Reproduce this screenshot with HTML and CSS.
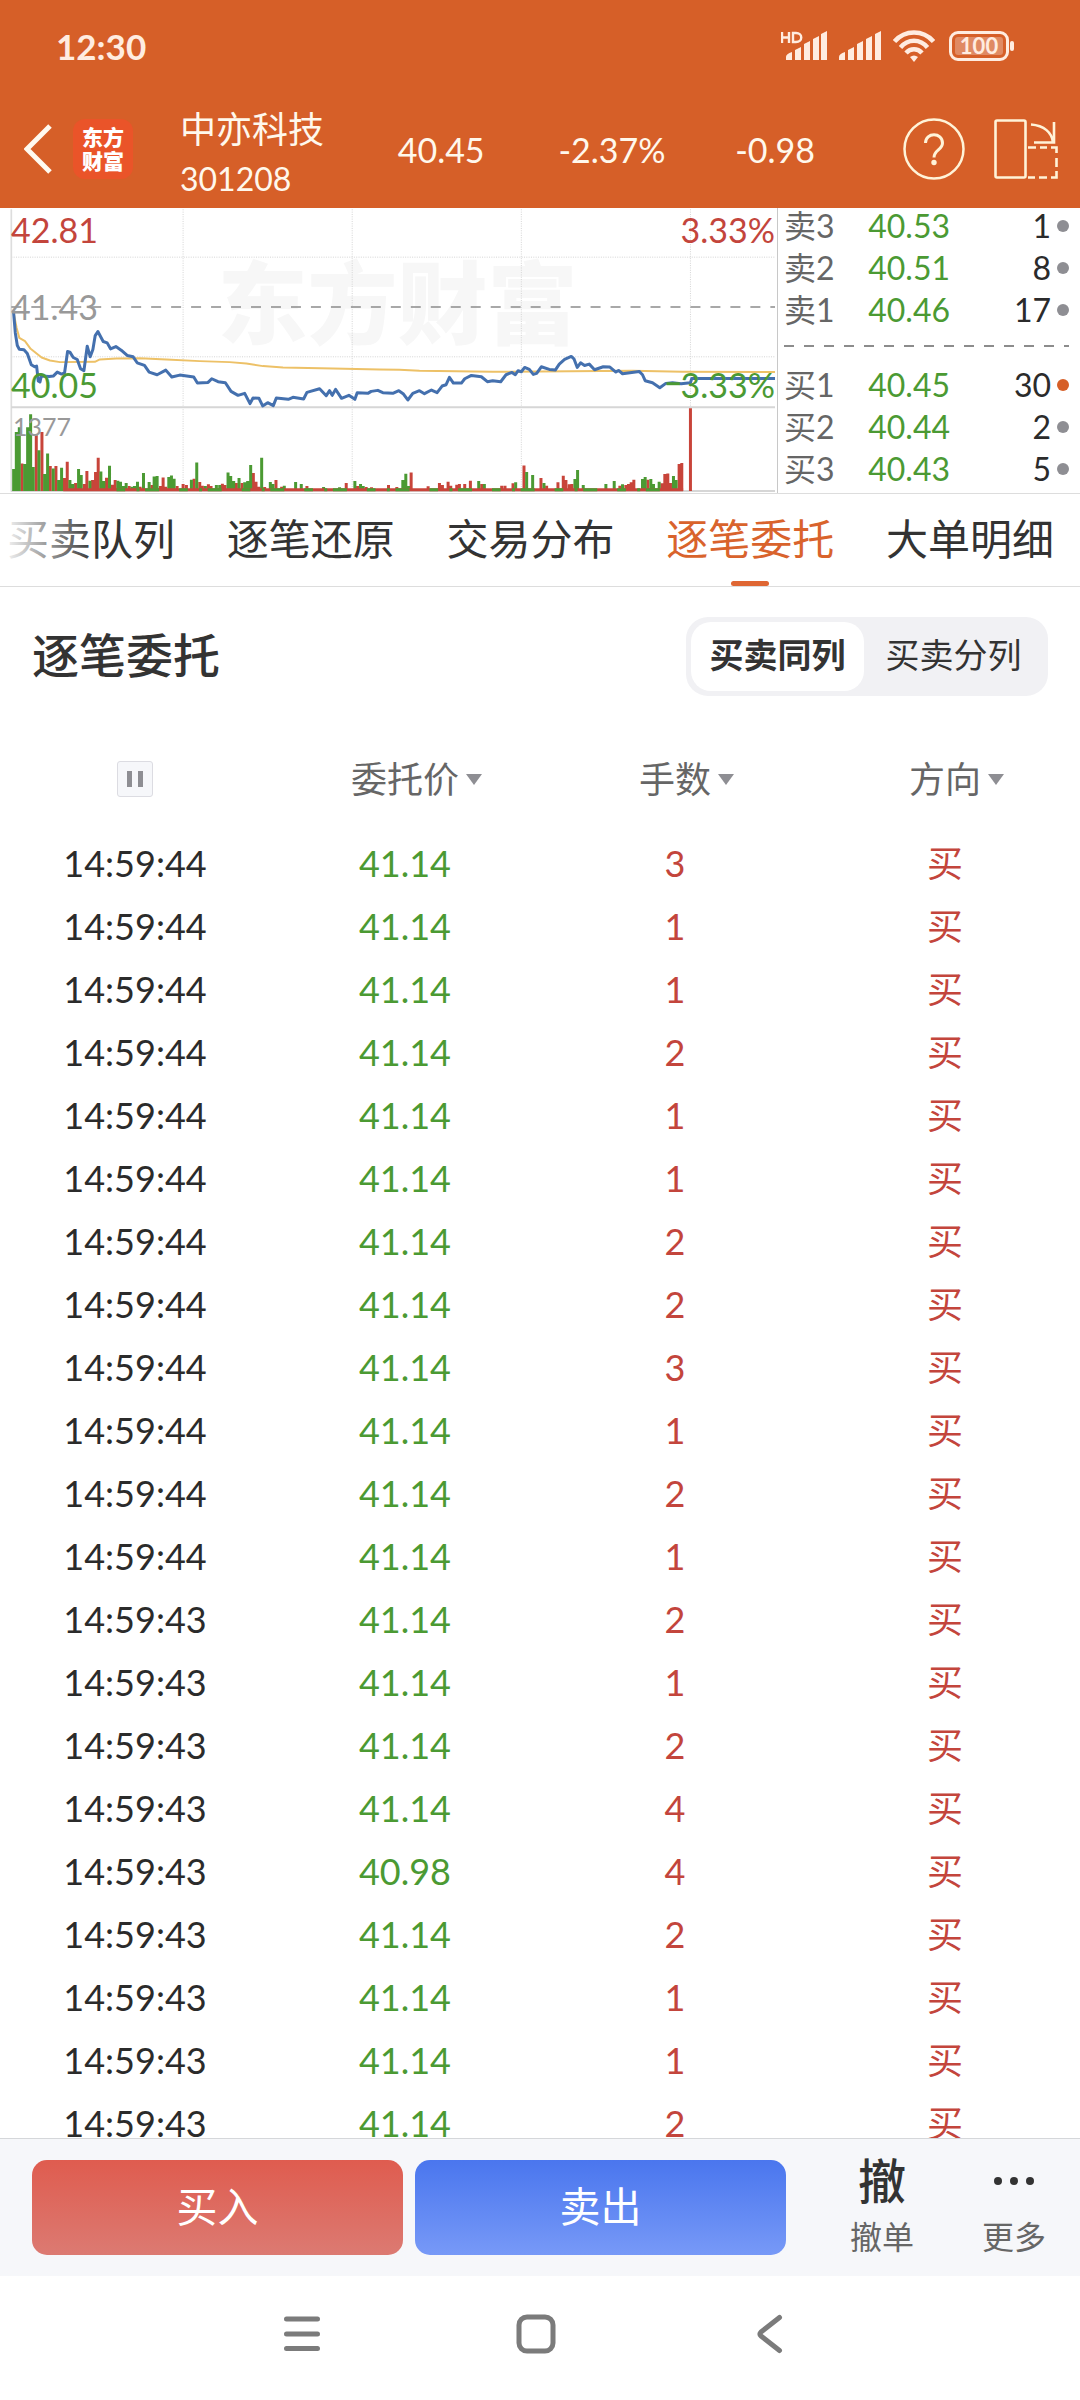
FILE: index.html
```html
<!DOCTYPE html>
<html lang="zh-CN">
<head>
<meta charset="utf-8">
<meta name="viewport" content="width=device-width, initial-scale=1">
<title>中亦科技 301208 - 逐笔委托</title>
<link rel="stylesheet" href="styles.css">
</head>
<body>
<div class="app">
  <header class="top">
    <div class="status">
      <span class="clock">12:30</span>
      <div class="status-icons">
        <svg width="46" height="32" viewBox="0 0 46 32" fill="#ffece0" aria-hidden="true">
          <path d="M1 2v11M8 2v11M1 7.500h7M12 3v9h3c7 0 7-9 0-9z" fill="none" stroke="#ffece0" stroke-width="2.400"/>
          <path d="M5 27q0-3 6-5v8H5zM14 20l6-3v13h-6zM23 14l6-3v19h-6zM32 9l6-3v24h-6zM40 4l6-3v29h-6z"/>
        </svg>
        <svg width="42" height="32" viewBox="0 0 42 32" fill="#ffece0" aria-hidden="true">
          <path d="M0 27q0-3 6-5v8H0zM9 20l6-3v13H9zM18 14l6-3v19h-6zM27 9l6-3v24h-6zM36 4l6-3v29h-6z"/>
        </svg>
        <svg width="42" height="34" viewBox="0 0 42 34" fill="none" stroke="#ffece0" stroke-width="4.500" aria-hidden="true">
          <path d="M1.500 12.500C12 .5 30 .5 40.500 12.500M7.500 18.500c7.500-9 19.500-9 27 0M13 24c4.500-5 11.500-5 16 0"/>
          <path d="M17 28q4-3 8 0l-4 5z" fill="#ffece0" stroke="none"/>
        </svg>
        <span class="battery"><span class="battery-level">100</span></span>
      </div>
    </div>
    <div class="nav">
      <button class="icon-btn" aria-label="返回">
        <svg width="28" height="50" viewBox="0 0 28 50" fill="none" stroke="#fffaf0" stroke-width="5"><path d="M26 2L3 25l23 23"/></svg>
      </button>
      <div class="logo">东方<br>财富</div>
      <div class="stock"><h1 class="stock-name">中亦科技</h1><span class="stock-code">301208</span></div>
      <span class="quote">40.45</span>
      <span class="quote">-2.37%</span>
      <span class="quote">-0.98</span>
      <div class="nav-actions">
        <button class="icon-btn" aria-label="帮助">
          <svg width="62" height="62" viewBox="0 0 62 62" fill="none" stroke="#fff3d8" stroke-width="2.500">
            <circle cx="31" cy="31" r="29.500"/>
            <path d="M22.500 25c0-11 17-11 17 0 0 7-8.500 7-8.500 14.500" stroke-width="3"/>
            <circle cx="31" cy="44.500" r="2.700" fill="#fff3d8" stroke="none"/>
          </svg>
        </button>
        <button class="icon-btn" aria-label="横屏">
          <svg width="64" height="62" viewBox="0 0 64 62" fill="none" stroke="#fff3d8" stroke-width="2.600">
            <rect x="1.500" y="2.500" width="30" height="57" rx="1.500"/>
            <path d="M37 6.500c13 1 21 8 22 18M60 4v20.500H40"/>
            <path d="M34 29.500h8M46 29.500h7M57 29.500h5.500V35M62.500 40v9M62.500 53v6.500H57M53 59.500h-8M41 59.500h-7"/>
          </svg>
        </button>
      </div>
    </div>
  </header>

  <section class="market">
    <div class="chart">
      <span class="watermark" aria-hidden="true">东方财富</span>
      <svg class="plot" viewBox="0 24 2334 858" preserveAspectRatio="none" fill="none" role="img" aria-label="分时走势">
        <g stroke="#d4d4d4" stroke-width="3" stroke-dasharray="3 4">
          <path d="M34 172H2328M34 472H2328M550 28V876M1058 28V876M1566 28V876M2074 28V876"/>
        </g>
        <path d="M34 28V878" stroke="#ddd" stroke-width="5"/>
        <path d="M34 624H2328M34 876H2328" stroke="#d6d6d6" stroke-width="6"/>
        <path d="M34 322H2328" stroke="#8c8c8c" stroke-width="5" stroke-dasharray="30 30"/>
        <g stroke-width="9">
          <path stroke="#c8443a" d="M66 876V793M109 876V708M126 876V698M151 876V801M168 876V801M193 876V837M202 876V788M227 876V852M253 876V855M261 876V816M278 876V843M287 876V819M295 876V776M320 876V836M337 876V857M346 876V843M388 876V861M421 876V863M456 876V858M482 876V861M490 876V835M498 876V863M532 876V861M550 876V855M560 876V858M583 876V839M600 876V849M608 876V860M626 876V856M634 876V861M668 876V854M676 876V858M710 876V852M727 876V852M761 876V822M769 876V848M778 876V863M795 876V864M829 876V843M846 876V863M922 876V861M1040 876V852M1074 876V861M1100 876V864M1116 876V865M1167 876V858M1192 876V864M1235 876V820M1286 876V862M1320 876V852M1329 876V858M1346 876V848M1354 876V860M1372 876V857M1380 876V855M1396 876V855M1413 876V845M1447 876V855M1507 876V860M1517 876V860M1541 876V853M1574 876V799M1625 876V837M1642 876V860M1676 876V850M1692 876V830M1700 876V843M1710 876V856M1718 876V855M1862 876V860M1880 876V858M1888 876V855M1896 876V850M1904 876V842M1946 876V842M1988 876V853M1997 876V825M2006 876V823M2014 876V852M2040 876V795M2048 876V792M2074 876V627"/>
          <path stroke="#4b9a33" d="M41 876V810M49 876V698M58 876V684M74 876V795M83 876V684M92 876V645M100 876V804M117 876V753M134 876V825M143 876V763M160 876V808M176 876V843M185 876V806M210 876V843M219 876V855M236 876V810M244 876V828M270 876V845M303 876V817M312 876V846M329 876V800M354 876V845M362 876V848M371 876V861M379 876V852M396 876V863M404 876V861M413 876V848M431 876V822M448 876V849M463 876V832M472 876V831M507 876V834M515 876V829M523 876V839M575 876V842M591 876V790M617 876V861M650 876V858M660 876V858M685 876V820M693 876V831M702 876V846M718 876V837M735 876V850M744 876V846M753 876V798M786 876V776M812 876V849M820 876V855M854 876V860M888 876V849M905 876V855M972 876V864M1020 876V865M1066 876V846M1083 876V855M1091 876V861M1210 876V843M1219 876V824M1227 876V861M1438 876V846M1455 876V855M1549 876V850M1582 876V819M1600 876V828M1634 876V852M1727 876V840M1735 876V813M1752 876V858M1820 876V855M1845 876V846M1870 876V856M1930 876V840M1938 876V834M1955 876V840M1963 876V855M1980 876V848M2023 876V831M2031 876V843"/>
          <path stroke="#c8443a" d="M190 872H2052"/>
          <path stroke="#4b9a33" stroke-dasharray="26 34 9 17 42 60" d="M350 872H2036"/>
        </g>
        <path stroke="#edc167" stroke-width="6" stroke-linejoin="round" d="M42 345L50 385L58 415L75 425L92 448L125 474L150 483L180 488L285 487L300 480L350 477L420 476L500 480L600 485L690 488L740 492L790 500L850 504L1000 507L1140 510L1200 511L1260 514L1480 517L1900 514L2050 517L2328 518"/>
        <path stroke="#4470ae" stroke-width="9" stroke-linejoin="round" d="M41 340L46 400L52 438L58 449L72 451L82 462L94 496L104 502L110 500L115 545L120 548L124 530L148 531L160 530L172 518L185 524L194 520L203 456L210 458L220 474L232 480L242 508L252 514L262 440L271 472L279 450L286 408L294 396L310 426L322 430L332 448L348 441L364 452L382 468L400 472L412 490L434 498L448 518L472 526L498 512L516 533L540 527L582 533L593 551L625 549L636 538L655 547L677 550L694 576L715 588L735 582L751 613L760 596L778 597L789 620L804 610L821 619L830 596L866 600L880 594L912 599L922 579L960 568L980 589L990 574L998 588L1008 570L1026 597L1048 588L1066 600L1073 580L1105 582L1115 576L1135 573L1150 580L1180 582L1198 574L1212 584L1225 602L1240 582L1260 574L1275 583L1296 572L1313 580L1328 560L1340 556L1350 534L1362 551L1386 551L1396 538L1416 528L1446 532L1464 547L1480 544L1504 547L1520 526L1538 519L1548 526L1556 514L1566 517L1576 504L1590 510L1602 525L1612 522L1626 502L1650 510L1668 512L1680 494L1696 480L1716 471L1724 478L1734 504L1744 490L1756 498L1770 494L1786 511L1812 502L1832 503L1850 518L1858 513L1870 523L1920 516L1930 526L1938 544L1960 550L1982 565L2000 552L2020 550L2046 553L2074 550L2078 537L2328 537"/>
        <path stroke="#4b9a33" stroke-width="9" d="M2002 553H2042"/>
      </svg>
      <span class="axis axis-top up">42.81</span>
      <span class="axis axis-top axis-end up">3.33%</span>
      <span class="axis axis-mid">41.43</span>
      <span class="axis axis-low down">40.05</span>
      <span class="axis axis-low axis-end down">3.33%</span>
      <span class="axis axis-vol">1377</span>
    </div>
    <div class="book">
      <div class="book-row"><span class="level">卖3</span><span class="book-price">40.53</span><span class="qty">1</span><i class="dot"></i></div>
      <div class="book-row"><span class="level">卖2</span><span class="book-price">40.51</span><span class="qty">8</span><i class="dot"></i></div>
      <div class="book-row"><span class="level">卖1</span><span class="book-price">40.46</span><span class="qty">17</span><i class="dot"></i></div>
      <div class="book-split"></div>
      <div class="book-row"><span class="level">买1</span><span class="book-price">40.45</span><span class="qty">30</span><i class="dot dot-hot"></i></div>
      <div class="book-row"><span class="level">买2</span><span class="book-price">40.44</span><span class="qty">2</span><i class="dot"></i></div>
      <div class="book-row"><span class="level">买3</span><span class="book-price">40.43</span><span class="qty">5</span><i class="dot"></i></div>
    </div>
  </section>

  <nav class="tabs">
    <button class="tab">买卖队列</button>
    <button class="tab">逐笔还原</button>
    <button class="tab">交易分布</button>
    <button class="tab tab-active">逐笔委托</button>
    <button class="tab">大单明细</button>
  </nav>

  <main class="orders">
    <div class="orders-head">
      <h2 class="orders-title">逐笔委托</h2>
      <div class="segment">
        <button class="segment-btn segment-on">买卖同列</button>
        <button class="segment-btn">买卖分列</button>
      </div>
    </div>
    <table class="ticks">
      <thead>
        <tr>
          <th><button class="pause" aria-label="暂停"></button></th>
          <th><button class="sort">委托价</button></th>
          <th><button class="sort">手数</button></th>
          <th><button class="sort">方向</button></th>
        </tr>
      </thead>
      <tbody>
        <tr><td>14:59:44</td><td>41.14</td><td>3</td><td>买</td></tr>
        <tr><td>14:59:44</td><td>41.14</td><td>1</td><td>买</td></tr>
        <tr><td>14:59:44</td><td>41.14</td><td>1</td><td>买</td></tr>
        <tr><td>14:59:44</td><td>41.14</td><td>2</td><td>买</td></tr>
        <tr><td>14:59:44</td><td>41.14</td><td>1</td><td>买</td></tr>
        <tr><td>14:59:44</td><td>41.14</td><td>1</td><td>买</td></tr>
        <tr><td>14:59:44</td><td>41.14</td><td>2</td><td>买</td></tr>
        <tr><td>14:59:44</td><td>41.14</td><td>2</td><td>买</td></tr>
        <tr><td>14:59:44</td><td>41.14</td><td>3</td><td>买</td></tr>
        <tr><td>14:59:44</td><td>41.14</td><td>1</td><td>买</td></tr>
        <tr><td>14:59:44</td><td>41.14</td><td>2</td><td>买</td></tr>
        <tr><td>14:59:44</td><td>41.14</td><td>1</td><td>买</td></tr>
        <tr><td>14:59:43</td><td>41.14</td><td>2</td><td>买</td></tr>
        <tr><td>14:59:43</td><td>41.14</td><td>1</td><td>买</td></tr>
        <tr><td>14:59:43</td><td>41.14</td><td>2</td><td>买</td></tr>
        <tr><td>14:59:43</td><td>41.14</td><td>4</td><td>买</td></tr>
        <tr><td>14:59:43</td><td>40.98</td><td>4</td><td>买</td></tr>
        <tr><td>14:59:43</td><td>41.14</td><td>2</td><td>买</td></tr>
        <tr><td>14:59:43</td><td>41.14</td><td>1</td><td>买</td></tr>
        <tr><td>14:59:43</td><td>41.14</td><td>1</td><td>买</td></tr>
        <tr><td>14:59:43</td><td>41.14</td><td>2</td><td>买</td></tr>
      </tbody>
    </table>
  </main>

  <footer class="trade">
    <div class="trade-main">
      <button class="trade-btn buy">买入</button>
      <button class="trade-btn sell">卖出</button>
    </div>
    <button class="action"><span class="action-icon">撤</span><span>撤单</span></button>
    <button class="action">
      <span class="action-icon"><svg width="42" height="10" viewBox="0 0 42 10" fill="#333" aria-hidden="true"><circle cx="5" cy="5" r="4"/><circle cx="21" cy="5" r="4"/><circle cx="37" cy="5" r="4"/></svg></span>
      <span>更多</span>
    </button>
  </footer>

  <div class="system">
    <button class="icon-btn" aria-label="最近任务">
      <svg width="40" height="40" viewBox="0 0 40 40" fill="none" stroke="#7b7b7b" stroke-width="5" stroke-linecap="round"><path d="M4.500 5h31M4.500 20h31M4.500 34.500h31"/></svg>
    </button>
    <button class="icon-btn" aria-label="主屏幕">
      <svg width="40" height="40" viewBox="0 0 40 40" fill="none" stroke="#7b7b7b" stroke-width="5"><rect x="3" y="3" width="34" height="34" rx="8"/></svg>
    </button>
    <button class="icon-btn" aria-label="返回上一页">
      <svg width="40" height="40" viewBox="0 0 40 40" fill="none" stroke="#7b7b7b" stroke-width="5" stroke-linecap="round" stroke-linejoin="round"><path d="M29.500 3.500L11 18q-2 2 0 4l18.500 14.500"/></svg>
    </button>
  </div>
</div>
</body>
</html>
```
FILE: styles.css
```css
* {
  box-sizing: border-box;
}

body {
  margin: 0;
  background: #fff;
  color: #2b2b2b;
  font-family: Lato, "Noto Sans CJK SC", sans-serif;
}

h1,
h2 {
  margin: 0;
  font-weight: 400;
}

button {
  padding: 0;
  border: 0;
  background: none;
  color: inherit;
  font: inherit;
  cursor: pointer;
}

svg {
  display: block;
}

.app {
  display: flex;
  flex-direction: column;
  height: 100vh;
  overflow: hidden;
}

.top,
.market,
.tabs,
.trade,
.system {
  flex: none;
}

/* Header */
.top {
  background: #d65f28;
  color: #fff8ec;
}

.status {
  display: flex;
  align-items: center;
  justify-content: space-between;
  height: 92px;
  padding: 0 66px 0 56px;
  color: #ffece0;
}

.clock {
  font-size: 35px;
  font-weight: 700;
  line-height: 44px;
}

.status-icons {
  display: flex;
  align-items: center;
  gap: 12px;
}

.battery {
  position: relative;
  width: 60px;
  height: 30px;
  margin: 0 5px 0 2px;
  padding: 3px;
  border: 3px solid #ffece0;
  border-radius: 9px;
}

.battery::after {
  content: "";
  position: absolute;
  top: 7px;
  right: -8px;
  width: 4px;
  height: 10px;
  border-radius: 2px;
  background: #ffece0;
}

.battery-level {
  display: block;
  border-radius: 3px;
  background: #e08a63;
  font-size: 22px;
  font-weight: 700;
  line-height: 18px;
  text-align: center;
}

.nav {
  display: grid;
  grid-template-columns: 49px 107px 218fr 161fr 177fr 168fr auto;
  align-items: center;
  height: 116px;
  padding: 0 22px 2px 24px;
}

.logo {
  width: 60px;
  height: 60px;
  padding: 6px 0;
  border-radius: 12px;
  background: #ea5429;
  color: #fff;
  font-size: 21px;
  font-weight: 900;
  line-height: 24px;
  text-align: center;
}

.stock {
  padding-top: 9px;
}

.stock-name {
  font-size: 36px;
  line-height: 50px;
}

.stock-code {
  display: block;
  font-size: 32px;
  line-height: 50px;
}

.quote {
  font-size: 34px;
}

.nav-actions {
  display: flex;
  gap: 29px;
}

/* Intraday chart and order book */
.market {
  display: grid;
  grid-template-columns: 778fr 302fr;
  height: 286px;
  border-bottom: 1px solid #ddd;
}

.chart {
  position: relative;
  border-right: 1px solid #c8c8c8;
}

.plot {
  position: relative;
  width: 100%;
  height: 285px;
}

.watermark {
  position: absolute;
  top: 34px;
  left: 28%;
  color: #f7f7f7;
  font-size: 90px;
  font-weight: 900;
  line-height: 120px;
}

.axis {
  position: absolute;
  left: 11px;
  color: #999;
  font-size: 34px;
  line-height: 40px;
}

.axis-end {
  right: 2px;
  left: auto;
}

.axis-top {
  top: 2px;
}

.axis-mid {
  top: 79px;
}

.axis-low {
  top: 157px;
}

.axis-vol {
  top: 198px;
  left: 13px;
  font-size: 25px;
}

.up {
  color: #c3453c;
}

.down {
  color: #4b9a33;
}

.book {
  padding: 0 11px 0 6px;
}

.book-row {
  display: grid;
  grid-template-columns: 60px 106px 1fr 12px;
  align-items: center;
  height: 42px;
  padding-bottom: 6px;
  font-size: 32px;
  line-height: 36px;
}

.level {
  color: #666;
}

.book-price {
  color: #4b9a33;
  text-align: right;
}

.qty {
  padding-right: 6px;
  text-align: right;
}

.dot {
  width: 12px;
  height: 12px;
  border-radius: 50%;
  background: #8e8e93;
}

.dot-hot {
  background: #d65f28;
}

.book-split {
  height: 2px;
  margin: 11px 0 20px;
  background: repeating-linear-gradient(90deg, #8c8c8c 0 10px, transparent 10px 20px);
}

/* Tabs */
.tabs {
  position: relative;
  display: flex;
  justify-content: space-between;
  height: 93px;
  padding: 0 26px 0 7px;
  border-bottom: 1px solid #ddd;
}

.tabs::before {
  content: "";
  position: absolute;
  z-index: 1;
  top: 0;
  left: 0;
  width: 96px;
  height: 92px;
  background: linear-gradient(90deg, #fff, rgba(255, 255, 255, 0));
  pointer-events: none;
}

.tab {
  position: relative;
  padding-bottom: 7px;
  color: #333;
  font-size: 42px;
  white-space: nowrap;
}

.tab-active {
  color: #d9632c;
}

.tab-active::after {
  content: "";
  position: absolute;
  bottom: 0;
  left: 50%;
  width: 38px;
  height: 5px;
  margin-left: -19px;
  border-radius: 3px;
  background: #df6633;
}

/* Order list */
.orders {
  flex: 1;
  min-height: 0;
  overflow: hidden;
}

.orders-head {
  display: flex;
  align-items: center;
  justify-content: space-between;
  height: 138px;
  padding: 0 32px;
}

.orders-title {
  padding-bottom: 7px;
  color: #333;
  font-size: 47px;
  font-weight: 500;
}

.segment {
  display: flex;
  height: 79px;
  padding: 5px;
  border-radius: 22px;
  background: #f1f1f4;
  color: #333;
}

.segment-btn {
  width: 179px;
  padding-bottom: 5px;
  border-radius: 20px;
  font-size: 34px;
}

.segment-on {
  width: 173px;
  background: #fff;
  font-weight: 700;
}

.ticks {
  width: 100%;
  table-layout: fixed;
  border-collapse: collapse;
  font-size: 36px;
  text-align: center;
}

.ticks th {
  height: 108px;
  padding: 0;
  color: #666;
  font-weight: 400;
}

.ticks td {
  height: 63px;
  padding: 0 0 4px;
  line-height: 44px;
}

.ticks td:nth-child(2) {
  color: #4b9a33;
}

.ticks td:nth-child(n + 3) {
  color: #c3453c;
}

.pause {
  display: block;
  width: 36px;
  height: 36px;
  margin: 0 auto;
  padding: 9px;
  border: 1px solid #dcdce2;
  border-radius: 3px;
  background: #f6f7fa;
}

.pause::before {
  content: "";
  display: block;
  height: 16px;
  border: solid #8e8e93;
  border-width: 0 5px;
}

.sort {
  position: relative;
  padding-bottom: 5px;
}

.sort::after {
  content: "";
  position: absolute;
  top: 50%;
  left: 100%;
  margin: -5px 0 0 7px;
  border: 8px solid transparent;
  border-top: 11px solid #8e8e93;
  border-bottom: 0;
}

/* Trade bar */
.trade {
  display: flex;
  align-items: center;
  height: 138px;
  border-top: 1px solid #d5d7da;
  background: #f6f7fa;
}

.trade-main {
  display: flex;
  flex: 1;
  gap: 12px;
  padding: 0 30px 0 32px;
}

.trade-btn {
  flex: 1;
  height: 95px;
  padding-bottom: 7px;
  border-radius: 15px;
  color: #fff;
  font-size: 41px;
}

.buy {
  background: linear-gradient(#df5c4f, #dc7a72);
}

.sell {
  background: linear-gradient(#4a76ee, #7799f7);
}

.action {
  display: flex;
  flex-direction: column;
  align-items: center;
  gap: 9px;
  width: 132px;
  color: #666;
  font-size: 32px;
  line-height: 44px;
}

.action-icon {
  display: flex;
  align-items: center;
  height: 50px;
  color: #333;
  font-size: 48px;
  font-weight: 500;
}

/* System navigation */
.system {
  display: flex;
  align-items: center;
  justify-content: center;
  gap: 194px;
  height: 124px;
  padding: 0 8px 8px 0;
}
```
